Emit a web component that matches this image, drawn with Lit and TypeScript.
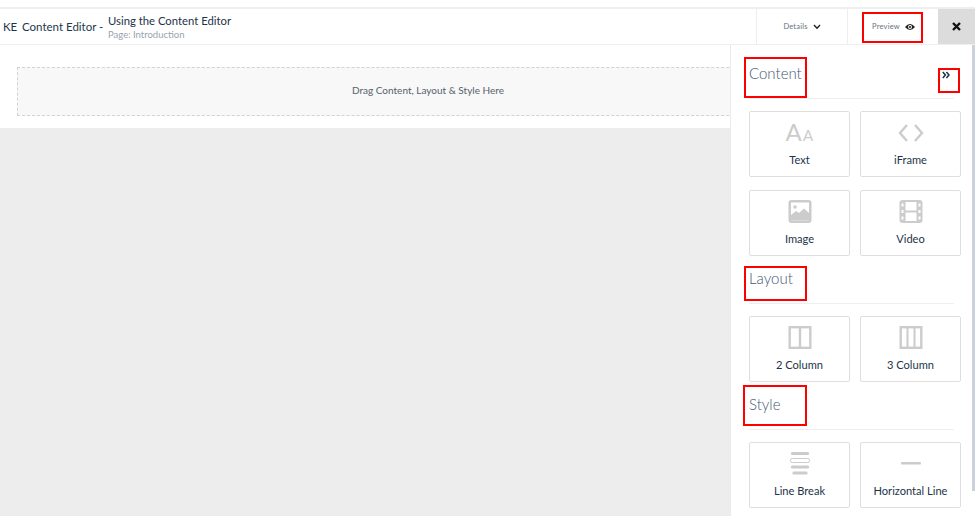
import { LitElement, html, css, svg } from "lit";
import { customElement } from "lit/decorators.js";

const icons: Record<string, unknown> = {
  text: svg`<text x="-0.5" y="20" class="ia">A</text><text x="17" y="20" class="ib">A</text>`,
  code: svg`<path d="M10 4 L3 12 L10 20 M18 4 L25 12 L18 20" fill="none" stroke="#ccc" stroke-width="2.4"/>`,
  image: svg`<rect x="2.5" y="0" width="23" height="23" rx="3" fill="#ccc"/><rect x="5" y="2.5" width="18" height="18" fill="#fff"/><circle cx="9" cy="7" r="1.8" fill="#ccc"/><path d="M5 20.5 L5 15 L10 11 L13 13 L18 8.5 L23 13 L23 20.5 Z" fill="#ccc"/>`,
  video: svg`<rect x="2.5" y="0" width="23" height="23" rx="3" fill="#ccc"/><rect x="8.5" y="2" width="11" height="8.5" fill="#fff"/><rect x="8.5" y="12.5" width="11" height="8.5" fill="#fff"/><path d="M4.5 3.5h2v3h-2zM4.5 10h2v3h-2zM4.5 16.5h2v3h-2zM21.5 3.5h2v3h-2zM21.5 10h2v3h-2zM21.5 16.5h2v3h-2z" fill="#fff"/>`,
  col2: svg`<rect x="3.7" y="1.2" width="20.6" height="20.6" fill="none" stroke="#ccc" stroke-width="2.4"/><path d="M14 0v23" stroke="#ccc" stroke-width="2.4"/>`,
  col3: svg`<rect x="3.7" y="1.2" width="20.6" height="20.6" fill="none" stroke="#ccc" stroke-width="2.4"/><path d="M10.5 0v23M17.5 0v23" stroke="#ccc" stroke-width="2"/>`,
  lines: svg`<rect x="5" y="0" width="18" height="3" rx="1.2" fill="#ccc"/><rect x="4.5" y="6.5" width="19" height="4" rx="2" fill="#fff" stroke="#ccc"/><rect x="5" y="13.5" width="18" height="3" rx="1.2" fill="#ccc"/><rect x="6.5" y="19.5" width="15" height="3" rx="1.2" fill="#ccc"/>`,
  hr: svg`<rect x="4" y="10" width="20" height="2.6" rx="1.2" fill="#ccc"/>`,
};

@customElement("app-root")
export class AppRoot extends LitElement {
  static styles = css`
    :host { display: block; width: 977px; height: 516px; overflow: hidden; position: relative; background: #fff;
      font-family: "Lato", "Open Sans", sans-serif; color: #1d3349; }
    * { box-sizing: border-box; }
    .top { width: 975px; height: 9px; border-bottom: 2px solid #eee; }
    .header { width: 975px; height: 36px; display: flex; align-items: stretch; border-bottom: 1px solid #eee; font-size: 11.5px; }
    .ke { padding: 11px 0 0 3px; width: 22px; }
    .ce { padding-top: 11px; width: 86px; color: #22384d; white-space: nowrap; }
    .titles { flex: 1; padding-top: 4px; }
    .title { font-size: 11.3px; line-height: 15px; white-space: nowrap; }
    .sub { font-size: 9.5px; line-height: 12px; color: #98a3ae; margin-top: 1px; }
    .tab { display: flex; align-items: center; justify-content: center; gap: 5px; font-size: 7.5px; color: #66717c; border-left: 1px solid #eee; letter-spacing: .2px; }
    .details { width: 91px; }
    .preview { width: 91px; padding-left: 1px; }
    .close { width: 37px; background: #dcdcdc; display: flex; align-items: center; justify-content: center; }
    .body { display: flex; height: 471px; width: 975px; }
    .main { width: 730px; background: #ededed; overflow: hidden; }
    .canvas { height: 83px; background: #fff; padding: 22px 0 0 17px; }
    .drop { width: 822px; height: 49px; background: #f8f8f8; border: 1px dashed #d2d2d2; display: flex; align-items: center; justify-content: center;
      padding-bottom: 3px; font-size: 10px; color: #56616c; }
    .panel { width: 245px; border-left: 1px solid #eaeaea; padding: 6px 0 0 18px; height: 471px; }
    .head { height: 48px; margin-right: 21px; border-bottom: 1px solid #eceef2; font-size: 15px; line-height: 18px; padding-top: 13px; color: #3f5874; font-weight: 300; display: flex; justify-content: space-between; }
    .chev { margin: 7px 4px 0 0; }
    .grid { display: grid; grid-template-columns: 101px 101px; column-gap: 10px; row-gap: 13px; margin: 12px 0 0; }
    .card { height: 66px; border: 1px solid #dedede; border-radius: 2px; background: #fff; display: flex; flex-direction: column; align-items: center; padding-top: 9px; font-size: 11.1px; }
    .card svg { display: block; margin-bottom: 8px; overflow: visible; }
    .ia { font: 24px "Lato", sans-serif; fill: #ccc; }
    .ib { font: 15px "Lato", sans-serif; fill: #ccc; }
    .scroll { position: absolute; left: 972px; top: 45px; width: 3px; height: 446px; background: #c9d1da; }
    .mark { position: absolute; border: 2px solid #f00; pointer-events: none; }
  `;

  card(label: string, icon: string) {
    return html`<div class="card"><svg width="28" height="24" viewBox="0 0 28 24">${icons[icon]}</svg>${label}</div>`;
  }

  render() {
    return html`
      <div class="top"></div>
      <div class="header">
        <div class="ke">KE</div>
        <div class="ce">Content Editor -</div>
        <div class="titles">
          <div class="title">Using the Content Editor</div>
          <div class="sub">Page: Introduction</div>
        </div>
        <div class="tab details">Details
          <svg width="8" height="6" viewBox="0 0 8 6"><path d="M1 1 L4 4.2 L7 1" fill="none" stroke="#222" stroke-width="1.4"/></svg>
        </div>
        <div class="tab preview">Preview
          <svg width="10" height="8" viewBox="0 0 10 8"><path d="M0 4 Q5 -2 10 4 Q5 10 0 4Z" fill="#222"/><circle cx="5" cy="4" r="2" fill="#fff"/><circle cx="5" cy="4" r="1.1" fill="#222"/></svg>
        </div>
        <div class="close">
          <svg width="9" height="9" viewBox="0 0 9 9"><path d="M1 1 L8 8 M8 1 L1 8" stroke="#111" stroke-width="2.4"/></svg>
        </div>
      </div>
      <div class="body">
        <div class="main">
          <div class="canvas"><div class="drop">Drag Content, Layout &amp; Style Here</div></div>
        </div>
        <div class="panel">
          <div class="head"><span>Content</span>
            <svg class="chev" width="8" height="8" viewBox="0 0 8 8"><path d="M0.8 1 L3.4 4 L0.8 7 M4.4 1 L7 4 L4.4 7" fill="none" stroke="#1d3349" stroke-width="1.5"/></svg>
          </div>
          <div class="grid">${this.card("Text", "text")}${this.card("iFrame", "code")}${this.card("Image", "image")}${this.card("Video", "video")}</div>
          <div class="head"><span>Layout</span></div>
          <div class="grid">${this.card("2 Column", "col2")}${this.card("3 Column", "col3")}</div>
          <div class="head"><span>Style</span></div>
          <div class="grid">${this.card("Line Break", "lines")}${this.card("Horizontal Line", "hr")}</div>
        </div>
      </div>
      <div class="scroll"></div>
      <div class="mark" style="left:862px;top:12px;width:61px;height:31px"></div>
      <div class="mark" style="left:744px;top:57px;width:63px;height:41px"></div>
      <div class="mark" style="left:938px;top:68px;width:22px;height:25px"></div>
      <div class="mark" style="left:744px;top:266px;width:63px;height:35px"></div>
      <div class="mark" style="left:743px;top:385px;width:64px;height:41px"></div>
    `;
  }
}
